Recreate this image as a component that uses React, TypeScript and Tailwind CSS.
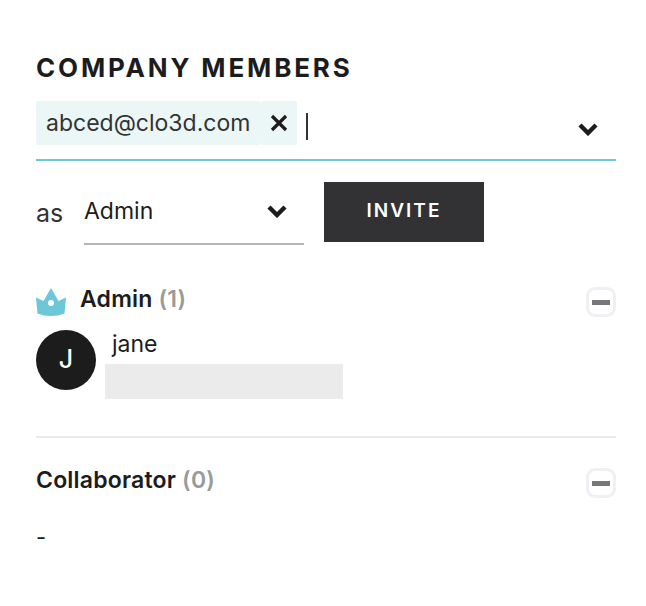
const font = { fontFamily: "Inter, sans-serif" };

const Chevron = ({ className }: { className?: string }) => (
  <svg viewBox="0 0 20 14" className={className} fill="none" stroke="#1c1c1c" strokeWidth={4.4}>
    <path d="M2 3l8 8 8-8" />
  </svg>
);

const Crown = () => (
  <svg viewBox="0 0 30 28" className="w-[30px] h-[28px]">
    <path
      d="M0 9.5l7.5 3.5L15 0l7.5 13L30 9.5l-1.5 16Q22 28 15 28T1.500 25.500z"
      fill="#6cc7d9"
    />
    <circle cx="15" cy="15" r="3" fill="#fff" />
  </svg>
);

const Collapse = () => (
  <div className="w-[30px] h-[30px] rounded-[9px] border-[3px] border-[#f0f0f4] flex items-center justify-center">
    <div className="w-[18px] h-[5px] bg-[#77777a]" />
  </div>
);

export default function App() {
  return (
    <div className="w-[646px] h-[606px] bg-white text-[#1c1c1c] pl-9 pr-[30px] pt-[53px]" style={font}>
      <h1 className="text-[26px] leading-[30px] font-bold tracking-[2.85px]">COMPANY MEMBERS</h1>

      <div className="mt-[3px] h-[75px] border-b-2 border-[#6cc7d9] flex items-start pt-[15px] pr-[18px]">
        <div className="h-[44px] flex text-[23px] text-[#333]">
          <span className="w-[225px] bg-[#ebf6f6] rounded-[3px] pl-[10px] flex items-center">abced@clo3d.com</span>
          <span className="w-[36px] bg-[#ebf6f6] rounded-[3px] flex items-center justify-center">
            <svg viewBox="0 0 18 18" className="w-[18px] h-[18px]" stroke="#1c1c1c" strokeWidth={3.2}>
              <path d="M2 2l14 14M16 2L2 16" />
            </svg>
          </span>
        </div>
        <div className="ml-[9px] mt-[12px] w-[2px] h-[27px] bg-[#333]" />
        <Chevron className="ml-auto mt-[21px] w-[20px] h-[14px]" />
      </div>

      <div className="mt-[21px] flex items-start">
        <span className="mt-[16px] w-[48px] text-[25px] leading-[30px] text-[#333]">as</span>
        <div className="w-[220px] h-[63px] border-b-2 border-[#b5b5b5] flex items-center justify-between pr-[17px] text-[23px] pb-[3px]">
          <span>Admin</span>
          <Chevron className="w-[20px] h-[14px]" />
        </div>
        <button className="ml-[20px] w-[160px] h-[60px] bg-[#323234] text-white text-[19px] font-semibold tracking-[2px] pb-[2px]">
          INVITE
        </button>
      </div>

      <div className="mt-[42px] flex items-center justify-between">
        <div className="flex items-center gap-[14px]">
          <Crown />
          <span className="text-[23px] leading-[24px] font-semibold tracking-[0.2px] mb-[6px]">
            Admin <span className="text-[#9a9a9a]">(1)</span>
          </span>
        </div>
        <Collapse />
      </div>

      <div className="mt-[13px] flex items-start">
        <div className="w-[60px] h-[60px] rounded-full bg-[#1c1c1c] text-white flex items-center justify-center text-[25px] font-medium">
          J
        </div>
        <div className="ml-[9px]">
          <div className="ml-[7px] text-[23px] leading-[28px]">jane</div>
          <div className="mt-[6px] w-[238px] h-[35px] bg-[#ebebeb]" />
        </div>
      </div>

      <div className="mt-[37px] border-t-2 border-[#eaeaea] pt-[30px] flex items-center justify-between">
        <span className="text-[23px] leading-[24px] font-semibold tracking-[0.2px] mb-[6px]">
          Collaborator <span className="text-[#9a9a9a]">(0)</span>
        </span>
        <Collapse />
      </div>

      <div className="mt-[25px] text-[22px] leading-[28px]">-</div>
    </div>
  );
}
